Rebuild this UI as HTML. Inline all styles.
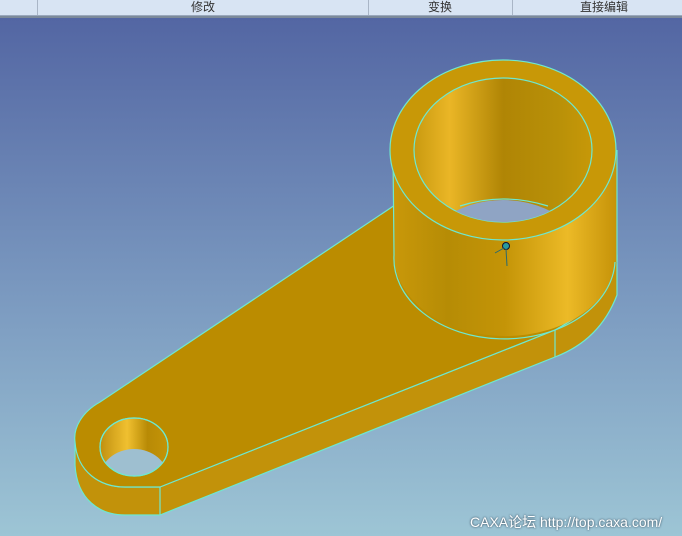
<!DOCTYPE html>
<html><head><meta charset="utf-8"><style>
html,body{margin:0;padding:0;width:682px;height:536px;overflow:hidden;font-family:"Liberation Sans","Noto Sans CJK SC",sans-serif;}
.hdr{position:absolute;left:0;top:0;width:682px;height:15px;background:#d8e4f3;border-bottom:1px solid #9aa8bc;font-size:12px;color:#333;}
.hdr span{position:absolute;top:-2px;}
.sep{position:absolute;top:0;width:1px;height:15px;background:#a9b5c6;}
.hdr2{position:absolute;left:0;top:16px;width:682px;height:2px;background:#7c8a9a;}
svg{position:absolute;left:0;top:18px;}
.cap{position:absolute;left:470px;top:512px;font-size:14px;color:#fff;text-shadow:0 0 2px #234;}
</style></head><body>
<div class="hdr"><div class="sep" style="left:37px"></div><div class="sep" style="left:368px"></div><div class="sep" style="left:512px"></div>
<span style="left:191px">修改</span><span style="left:428px">变换</span><span style="left:580px">直接编辑</span></div>
<div class="hdr2"></div>
<svg width="682" height="518" viewBox="0 18 682 518">
<defs>
<linearGradient id="bg" x1="0" y1="0" x2="0" y2="1"><stop offset="0" stop-color="#5366a3"/><stop offset="0.5" stop-color="#7896be"/><stop offset="1" stop-color="#9dc5d5"/></linearGradient>
<linearGradient id="cyl" x1="0" y1="0" x2="1" y2="0"><stop offset="0" stop-color="#c9980a"/><stop offset="0.25" stop-color="#b68c05"/><stop offset="0.5" stop-color="#c49407"/><stop offset="0.78" stop-color="#ecba27"/><stop offset="1" stop-color="#c59208"/></linearGradient>
<linearGradient id="inn" x1="0" y1="0" x2="1" y2="0"><stop offset="0" stop-color="#c99a10"/><stop offset="0.2" stop-color="#eab626"/><stop offset="0.5" stop-color="#b08505"/><stop offset="0.8" stop-color="#b89008"/><stop offset="1" stop-color="#c79808"/></linearGradient>
<linearGradient id="hole" x1="0" y1="0" x2="1" y2="0"><stop offset="0" stop-color="#c09010"/><stop offset="0.4" stop-color="#f0c030"/><stop offset="0.7" stop-color="#b88a05"/><stop offset="1" stop-color="#c49408"/></linearGradient>
<clipPath id="ci"><ellipse cx="503" cy="150" rx="89" ry="72"/></clipPath>
<clipPath id="ch"><ellipse cx="134" cy="447" rx="34" ry="29"/></clipPath>
</defs>
<rect x="0" y="18" width="682" height="518" fill="url(#bg)"/>
<g stroke="#6ee8d0" stroke-width="1.2" stroke-linejoin="round">
<!-- plate side faces -->
<path d="M75 440 L75 465 C77 500 100 515 125 515 L160 515 L555 357 Q600 340 617 295 L617 255 Q610 300 555 330 L160 487 L125 487 C100 487 77 472 75 440 Z" fill="#c2920a"/>
<line x1="160" y1="487" x2="160" y2="515"/>
<line x1="555" y1="330" x2="555" y2="357"/>
<!-- plate top -->
<path d="M395 205 L100 402 C82 412 73 428 75 442 C77 472 100 487 125 487 L160 487 L555 330 Q610 300 617 255 L395 205 Z" fill="#bb8c00"/>
<!-- cylinder body -->
<path d="M392 150 L394 255 A110 80 0 0 0 617 255 L617 150 Z" fill="url(#cyl)" stroke="none"/>
<path d="M393 150 L394 255 A110 80 0 0 0 615 262" fill="none"/>
<line x1="617" y1="150" x2="617" y2="262"/>
<!-- top ring -->
<ellipse cx="503" cy="150" rx="113" ry="90" fill="#c89807"/>
<ellipse cx="503" cy="150" rx="89" ry="72" fill="url(#inn)"/>
<ellipse cx="503" cy="272" rx="89" ry="72" fill="#8fa4c4" clip-path="url(#ci)" stroke="none"/>
<path d="M460 206 Q503 192 548 206" fill="none"/>
<!-- small hole -->
<ellipse cx="134" cy="447" rx="34" ry="29" fill="url(#hole)"/>
<ellipse cx="134" cy="478" rx="34" ry="29" fill="#9ebfd0" clip-path="url(#ch)" stroke="none"/>
<ellipse cx="134" cy="447" rx="34" ry="29" fill="none"/>
</g>
<circle cx="506" cy="246" r="3.5" fill="#2a9aa0" stroke="#113" stroke-width="1"/>
<line x1="506" y1="249" x2="507" y2="266" stroke="#2a6a70" stroke-width="1"/>
<line x1="504" y1="248" x2="495" y2="253" stroke="#2a6a70" stroke-width="1"/>
</svg>
<div class="cap">CAXA论坛 http://top.caxa.com/</div>
</body></html>
